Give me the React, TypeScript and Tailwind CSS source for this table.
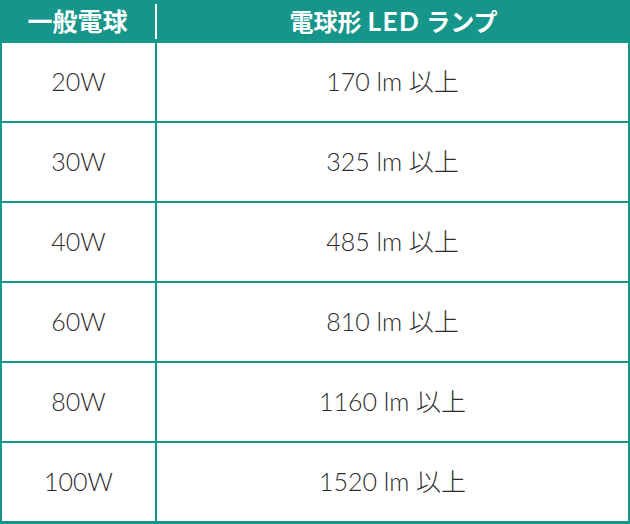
const rows = [
  { watt: "20W", lm: "170" },
  { watt: "30W", lm: "325" },
  { watt: "40W", lm: "485" },
  { watt: "60W", lm: "810" },
  { watt: "80W", lm: "1160" },
  { watt: "100W", lm: "1520" },
];

export default function App() {
  return (
    <div
      className="w-[630px] h-[524px] bg-[#16958a] text-[#2b2b2b]"
      style={{ fontFamily: '"Lato", "Noto Sans CJK JP", sans-serif' }}
    >
      {/* Header */}
      <div className="flex h-[43px] items-center text-white font-bold">
        <div className="w-[155px] text-center text-[25px]">一般電球</div>
        <div className="h-[35px] w-[2px] bg-white" />
        <div className="flex flex-1 items-center justify-center text-[24px]">
          <span>電球形</span>
          <span className="ml-[6px] mr-[6px] text-[26px] tracking-[1.5px]">LED</span>
          <span>ランプ</span>
        </div>
      </div>

      {/* Body */}
      <div className="mx-[2px] bg-white">
        {rows.map((r) => (
          <div key={r.watt} className="flex h-[80px] border-b-2 border-[#16958a] text-[25px] font-light">
            <div className="flex w-[155px] items-center justify-center border-r-2 border-[#16958a]">
              {r.watt}
            </div>
            <div className="flex flex-1 items-center justify-center">
              {r.lm} lm 以上
            </div>
          </div>
        ))}
      </div>
    </div>
  );
}
